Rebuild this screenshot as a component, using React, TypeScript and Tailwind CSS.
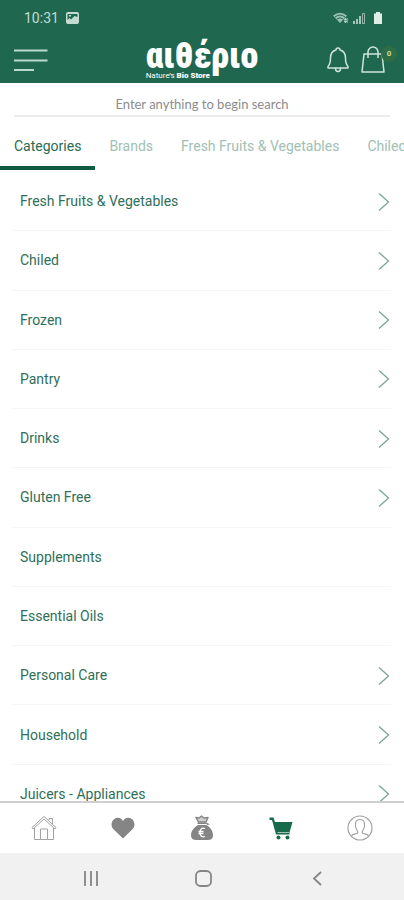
import React from "react";

const tabs = ["Categories", "Brands", "Fresh Fruits & Vegetables", "Chiled"];

const categories = [
  { name: "Fresh Fruits & Vegetables", nested: true },
  { name: "Chiled", nested: true },
  { name: "Frozen", nested: true },
  { name: "Pantry", nested: true },
  { name: "Drinks", nested: true },
  { name: "Gluten Free", nested: true },
  { name: "Supplements", nested: false },
  { name: "Essential Oils", nested: false },
  { name: "Personal Care", nested: true },
  { name: "Household", nested: true },
  { name: "Juicers - Appliances", nested: true },
];

function StatusBar() {
  return (
    <div className="flex h-9 items-center justify-between pl-6 pr-[21px] text-[#c3ddd3]">
      <div className="flex items-center gap-[7px]">
        <span className="text-[14px] leading-5">10:31</span>
        <svg width="13" height="12" viewBox="0 0 13 12" aria-hidden="true">
          <rect width="13" height="12" rx="2" fill="currentColor" />
          <path d="M1.500 2h10v3L8.500 4 5 7.500 3.500 6 1.500 8z" fill="#20674f" />
          <path d="M3 3h2v1.500H3z" fill="#c3ddd3" />
        </svg>
      </div>
      <div className="flex items-center gap-1">
        <svg width="16" height="12" viewBox="0 0 16 12" aria-hidden="true">
          <path d="M0 3.500Q7-2 14 3.500L7 11z" fill="currentColor" opacity=".75" />
          <path d="M2 5q5-4 10 0M4 7q3-2.500 6 0" fill="none" stroke="#20674f" />
          <path d="M11 8l1.500-2L14 8zM11 9h3l-1.500 2zM14.500 6v5" fill="currentColor" stroke="currentColor" strokeWidth=".5" />
        </svg>
        <svg width="12" height="12" viewBox="0 0 12 12" aria-hidden="true">
          <path d="M0 9h2v3H0zM3 7h2v5H3zM6 4h2v8H6z" fill="currentColor" opacity=".8" />
          <path d="M9.500 1.500h2v10h-2z" fill="none" stroke="currentColor" opacity=".7" />
        </svg>
        <svg className="ml-1" width="10" height="12" viewBox="0 0 10 12" aria-hidden="true">
          <path d="M3 0h4v1.500h2V12H1V1.500h2z" fill="#deeee7" />
        </svg>
      </div>
    </div>
  );
}

function Header() {
  return (
    <header className="bg-[#20674f]">
      <StatusBar />
      <div className="grid h-[47px] grid-cols-[1fr_auto_1fr] items-center px-[7px]">
        <button aria-label="Menu" className="justify-self-start pl-[7px] text-[#b9dacd]">
          <svg width="34" height="24" viewBox="0 0 34 24" fill="none" stroke="currentColor" strokeWidth="2" aria-hidden="true">
            <path d="M0 2.500h33.500M0 12.500h33.500M0 22h20" />
          </svg>
        </button>
        <div className="self-start text-white">
          <div className="font-['Roboto_Condensed','Liberation_Sans',sans-serif] text-[36px] font-black leading-10">
            αιθέριο
          </div>
          <div className="-mt-1 whitespace-nowrap text-[8px] leading-2">
            Nature’s <b className="font-black">Bio Store</b>
          </div>
        </div>
        <div className="flex items-center gap-3 justify-self-end text-[#cfe5dc]">
          <button aria-label="Notifications">
            <svg width="22" height="26" viewBox="0 0 22 26" fill="none" stroke="currentColor" strokeWidth="1.500" strokeLinejoin="round" aria-hidden="true">
              <path d="M9 3a2 2 0 0 1 4 0c4 1 5.500 4 5.500 8 0 5 .5 6.500 2.500 8.500v1.500H1v-1.500C3 17.500 3.500 16 3.500 11c0-4 1.500-7 5.500-8zM8.500 21.500a2.500 3 0 0 0 5 0" />
            </svg>
          </button>
          <button aria-label="Shopping bag, 0 items" className="relative w-[36px]">
            <svg width="24" height="27" viewBox="0 0 24 27" fill="none" stroke="currentColor" strokeWidth="1.500" strokeLinejoin="round" aria-hidden="true">
              <path d="M3 8h18l2 18H1zM7 12V6a5 5 0 0 1 10 0v6" />
            </svg>
            <span className="absolute right-0 top-0 size-4 rounded-full bg-[#2f6d45] text-[8px] font-bold leading-4 text-[#c9dcae]">
              0
            </span>
          </button>
        </div>
      </div>
    </header>
  );
}

function Chevron() {
  return (
    <svg width="12" height="18" viewBox="0 0 12 18" fill="none" stroke="#7aa596" strokeWidth="1.300" aria-hidden="true">
      <path d="M1 .5L10.500 9 1 17.500" />
    </svg>
  );
}

function BottomNav() {
  return (
    <nav aria-label="Main" className="grid h-[52px] shrink-0 grid-cols-5 items-center justify-items-center border-t-2 border-[#cfcfcf] bg-white px-[5px] text-[#858585]">
      <button aria-label="Home">
        <svg width="26" height="26" viewBox="0 0 26 26" fill="none" stroke="#a3a3a3" strokeLinejoin="round" aria-hidden="true">
          <path d="M1 12.500L13 1.500l12 11-1 1.500L13 4 2 14zM3.500 13v11.500h6V14h7v10.500h6V13M18 5V3.500h3.500V9M9.500 24.500h7" />
        </svg>
      </button>
      <button aria-label="Favourites">
        <svg width="24" height="22" viewBox="0 0 24 22" fill="currentColor" aria-hidden="true">
          <path d="M12 21.500L2.300 12C-.5 9 .3 4 3 2.200 6-.2 10 .5 12 4c2-3.500 6-4.200 9-1.800 2.700 1.800 3.500 6.800.7 9.800z" />
        </svg>
      </button>
      <button aria-label="Rewards">
        <svg width="24" height="26" viewBox="0 0 24 26" aria-hidden="true">
          <path d="M6 2.500l3 .5 2.500-2L14 3l4-.5L16 7H8.500z" fill="currentColor" fillOpacity=".4" stroke="currentColor" strokeWidth="1.500" strokeLinejoin="round" />
          <path d="M7.500 7.500h9V9h-9zM16.500 7.500l3.500 2-3 .5zM8 10h8.500c4 2.500 6.500 6 6.500 10.500 0 3-2 4.500-5 4.500H6c-3 0-5-1.500-5-4.500C1 16 4 12.500 8 10z" fill="currentColor" />
          <path d="M15 13.500c-3-1-5 .5-5 4s2 5 5 4M8.500 16.500h5M8.500 18.500h5" fill="none" stroke="#fff" strokeWidth="1.300" />
        </svg>
      </button>
      <button aria-label="Shop" aria-current="page" className="text-[#176b4a]">
        <svg width="24" height="23" viewBox="0 0 24 23" fill="currentColor" aria-hidden="true">
          <path d="M.5.500h4L6 5h17.500l-3 10.500 0 2H7L3 3H.5z" />
          <path d="M8.500 15.500H20" stroke="#fff" strokeWidth=".6" />
          <circle cx="9.500" cy="20.500" r="2" />
          <circle cx="18.500" cy="20.500" r="2" />
        </svg>
      </button>
      <button aria-label="Account">
        <svg width="26" height="26" viewBox="0 0 26 26" fill="none" stroke="#a3a3a3" strokeWidth="1.200" aria-hidden="true">
          <circle cx="13" cy="13" r="12" />
          <path d="M4.500 20.500c2-1.500 4.500-1.500 6-2.500.7-1-.2-2.500-1-3.500C7.500 10 8 4.500 13 4.500s5.500 5.500 3.500 10c-.8 1-1.700 2.500-1 3.500 1.500 1 4 1 6 2.500" />
        </svg>
      </button>
    </nav>
  );
}

function SystemBar() {
  return (
    <div className="grid h-[47px] shrink-0 grid-cols-3 items-center justify-items-center bg-[#f1f1f1] pb-px pl-[34px] pr-[30px] pt-1 text-[#858585]">
      <button aria-label="Recent apps">
        <svg width="16" height="15" viewBox="0 0 16 15" stroke="currentColor" strokeWidth="1.800" aria-hidden="true">
          <path d="M2 0v15M8 0v15M14 0v15" />
        </svg>
      </button>
      <button aria-label="Home screen">
        <svg width="17" height="17" viewBox="0 0 17 17" fill="none" stroke="currentColor" strokeWidth="1.800" aria-hidden="true">
          <rect x="1" y="1" width="15" height="15" rx="4.500" />
        </svg>
      </button>
      <button aria-label="Back">
        <svg width="10" height="15" viewBox="0 0 10 15" fill="none" stroke="currentColor" strokeWidth="1.800" aria-hidden="true">
          <path d="M9 1L2 7.500 9 14" />
        </svg>
      </button>
    </div>
  );
}

export default function App() {
  return (
    <div className="flex h-screen flex-col overflow-hidden bg-white font-[Roboto,sans-serif]">
      <Header />
      <main className="flex min-h-0 flex-1 flex-col">
        <div className="px-[14px] pt-[10px]">
          <input
            type="text"
            aria-label="Search"
            placeholder="Enter anything to begin search"
            className="block h-6 w-full border-b-2 border-[#ececec] bg-transparent text-center font-[Lato,sans-serif] text-[13px] text-[#777] outline-none placeholder:text-[#8c8c8c]"
          />
        </div>
        <div role="tablist" className="mt-[5px] flex h-12 shrink-0 overflow-hidden">
          {tabs.map((tab, i) => (
            <button
              key={tab}
              role="tab"
              aria-selected={i === 0}
              className={
                i === 0
                  ? "shrink-0 whitespace-nowrap border-b-4 border-[#115c40] px-[14px] pt-1 text-[14px] text-[#2a6b53]"
                  : "shrink-0 whitespace-nowrap border-b-4 border-transparent px-[14px] pt-1 text-[14px] text-[#9fc0b3]"
              }
            >
              {tab}
            </button>
          ))}
        </div>
        <div className="mt-[2px] min-h-0 flex-1 overflow-hidden px-[13px]">
          <ul className="grid h-[652px] auto-rows-fr">
            {categories.map(({ name, nested }) => (
              <li key={name} className="border-b border-[#f5f5f5]">
                <button className="flex h-full w-full items-center justify-between pl-[7px] pr-px pt-px text-left text-[14px] text-[#2f6f58]">
                  {name}
                  {nested && <Chevron />}
                </button>
              </li>
            ))}
          </ul>
        </div>
      </main>
      <BottomNav />
      <SystemBar />
    </div>
  );
}
